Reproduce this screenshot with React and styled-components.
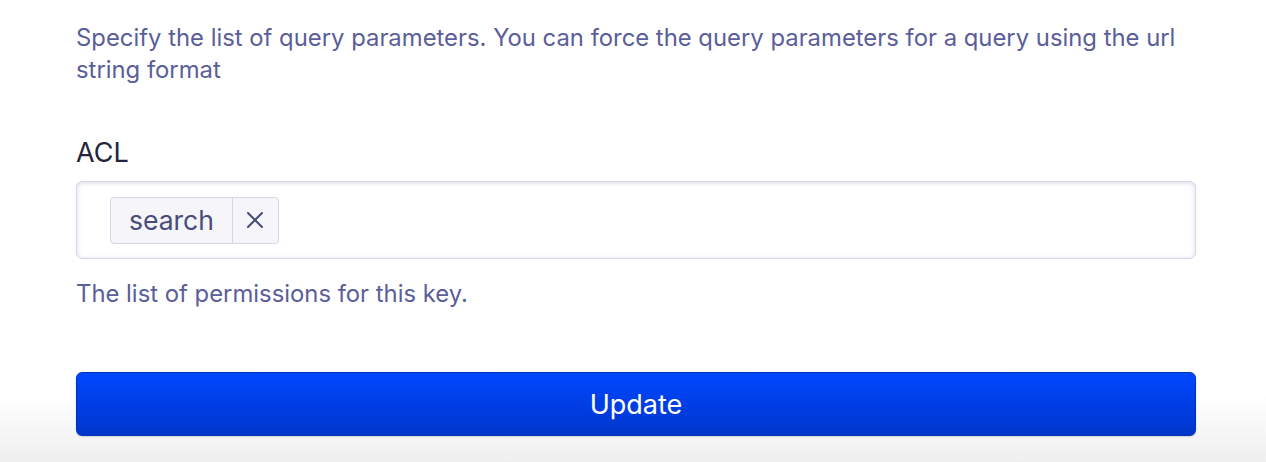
import React from 'react';
import styled, { createGlobalStyle } from 'styled-components';

const GlobalStyle = createGlobalStyle`
    html, body {
        margin: 0;
        padding: 0;
        background: #ffffff;
        font-family: Inter, "Noto Sans", sans-serif;
        -webkit-font-smoothing: antialiased;
    }
`;

const Page = styled.div`
    display: flex;
    flex-direction: column;
    width: 1266px;
    height: 462px;
    overflow: hidden;
`;

const Form = styled.div`
    display: flex;
    flex-direction: column;
    padding: 22px 70px 0 76px;
`;

const Description = styled.p`
    margin: 0;
    font-size: 23.85px;
    line-height: 32px;
    color: #5a5e9a;
`;

const Field = styled.div`
    display: flex;
    flex-direction: column;
    margin-top: 51px;
`;

const Label = styled.label`
    font-size: 27px;
    line-height: 32px;
    color: #23263b;
    margin-bottom: 12px;
`;

const TagInput = styled.div`
    display: flex;
    align-items: center;
    height: 78px;
    box-sizing: border-box;
    padding: 0 33px;
    border: 1px solid #d6d6e7;
    border-radius: 6px;
    background: #ffffff;
    box-shadow: inset 0 1px 4px 0 rgba(119, 122, 175, 0.3);
`;

const Tag = styled.div`
    display: flex;
    align-items: stretch;
    height: 47px;
    box-sizing: border-box;
    border: 1px solid #d6d6e7;
    border-radius: 4px;
    background: #f5f5fa;
    color: #484c7a;
`;

const TagLabel = styled.span`
    display: flex;
    align-items: center;
    padding: 0 18px;
    font-size: 26.5px;
    border-right: 1px solid #d6d6e7;
`;

const TagRemove = styled.button`
    display: flex;
    align-items: center;
    justify-content: center;
    width: 45px;
    padding: 0;
    border: none;
    background: transparent;
    color: #484c7a;
    cursor: pointer;
`;

const Help = styled.p`
    margin: 19px 0 0;
    font-size: 23.85px;
    line-height: 32px;
    color: #5a5e9a;
`;

const Footer = styled.div`
    flex: 1;
    display: flex;
    align-items: flex-end;
    padding: 0 70px 26px 76px;
    background: linear-gradient(to bottom, #ffffff 55%, #efefef 100%);
`;

const Button = styled.button`
    width: 100%;
    height: 64px;
    border: 1px solid #0033b8;
    border-radius: 6px;
    background: linear-gradient(to bottom, #0047ff 0%, #0036cc 100%);
    box-shadow: 0 1px 2px rgba(0, 0, 0, 0.15);
    color: #ffffff;
    font-family: Inter, "Noto Sans", sans-serif;
    font-size: 27px;
    cursor: pointer;
`;

const CloseIcon = () => (
    <svg width="18" height="18" viewBox="0 0 18 18" fill="none" stroke="currentColor" strokeWidth="2" strokeLinecap="round">
        <path d="M2 2L16 16M16 2L2 16" />
    </svg>
);

export default function App() {
    return (
        <Page>
            <GlobalStyle />
            <Form>
                <Description>
                    Specify the list of query parameters. You can force the query parameters for a query using the url string format
                </Description>
                <Field>
                    <Label>ACL</Label>
                    <TagInput>
                        <Tag>
                            <TagLabel>search</TagLabel>
                            <TagRemove aria-label="Remove search"><CloseIcon /></TagRemove>
                        </Tag>
                    </TagInput>
                    <Help>The list of permissions for this key.</Help>
                </Field>
            </Form>
            <Footer>
                <Button>Update</Button>
            </Footer>
        </Page>
    );
}
